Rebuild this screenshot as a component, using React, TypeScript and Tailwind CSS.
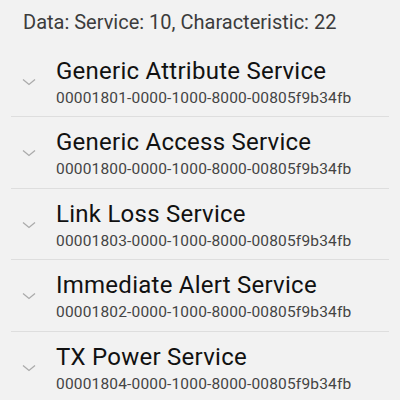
const SERVICES = [
  { name: "Generic Attribute Service", uuid: "00001801-0000-1000-8000-00805f9b34fb" },
  { name: "Generic Access Service", uuid: "00001800-0000-1000-8000-00805f9b34fb" },
  { name: "Link Loss Service", uuid: "00001803-0000-1000-8000-00805f9b34fb" },
  { name: "Immediate Alert Service", uuid: "00001802-0000-1000-8000-00805f9b34fb" },
  { name: "TX Power Service", uuid: "00001804-0000-1000-8000-00805f9b34fb" },
];

const Chevron = () => (
  <svg width="14" height="8" viewBox="0 0 14 8" fill="none" className="shrink-0">
    <path d="M1 1.5 L7 6.5 L13 1.5" stroke="#ababab" strokeWidth="1.3" />
  </svg>
);

export default function App() {
  return (
    <div
      className="w-[400px] h-[400px] overflow-hidden bg-[#f2f2f2]"
      style={{ fontFamily: "Roboto, 'Noto Sans', sans-serif" }}
    >
      <div className="h-[45.5px] pl-[23px] pt-[10px] text-[20px] leading-[24px] text-[#3c3c3c]">
        Data: Service: 10, Characteristic: 22
      </div>
      {SERVICES.map((s) => (
        <div key={s.uuid} className="mx-[11px] border-b border-[#dedede]">
          <div className="h-[70.5px] flex items-start">
            <div className="w-[45px] pl-[11px] pt-[32px]">
              <Chevron />
            </div>
            <div className="flex flex-col pt-[11px]">
              <span className="text-[24px] leading-[28px] tracking-[0.25px] text-[#111]">{s.name}</span>
              <span className="text-[15.5px] leading-[20px] tracking-[0.17px] mt-[3px] text-[#444]">{s.uuid}</span>
            </div>
          </div>
        </div>
      ))}
    </div>
  );
}
